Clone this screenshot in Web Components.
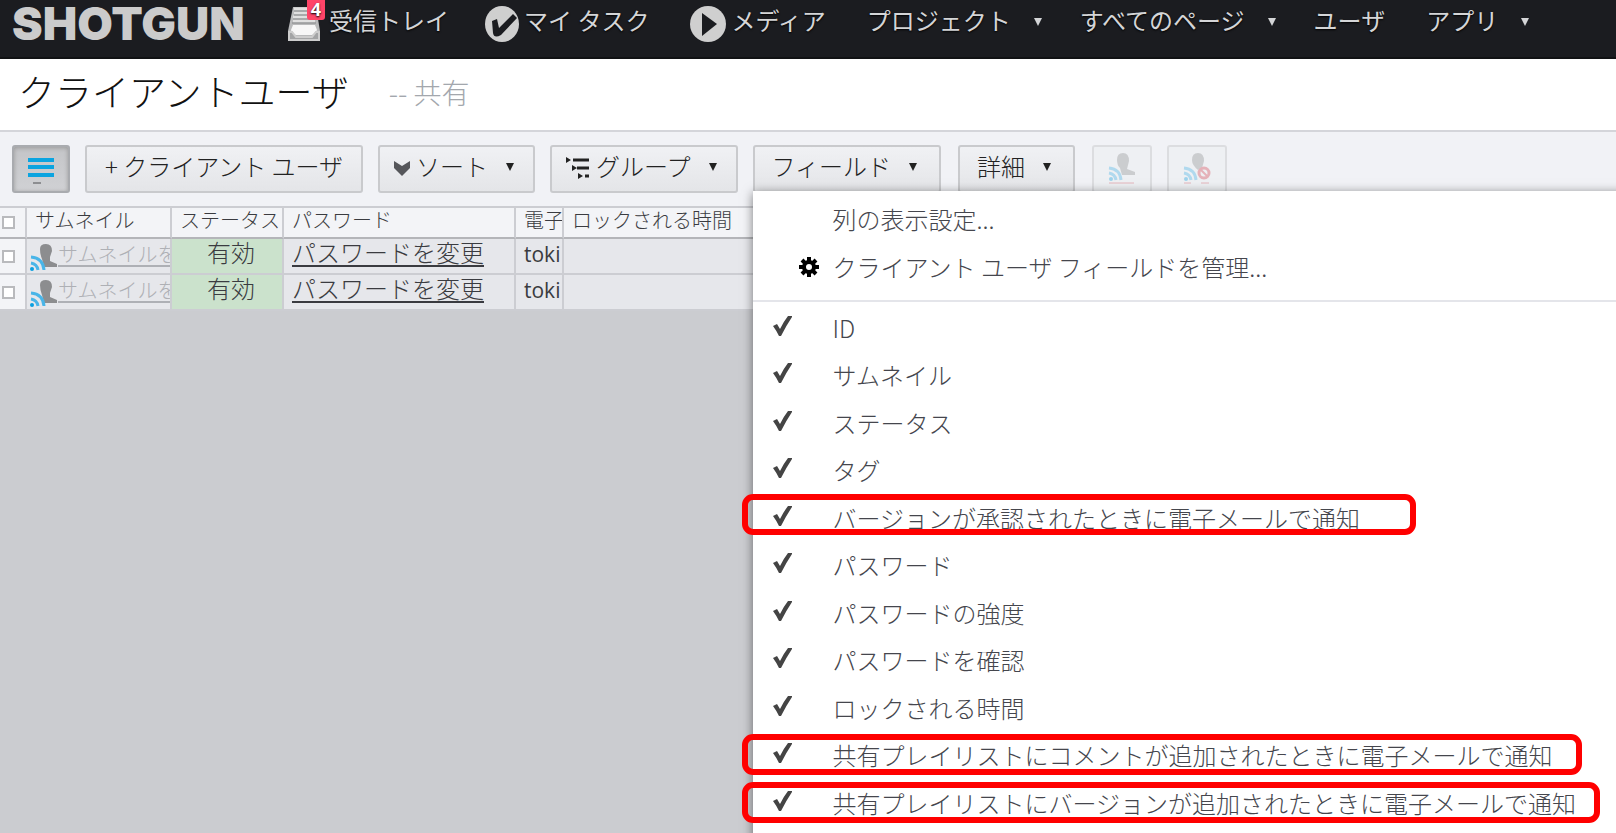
<!DOCTYPE html>
<html lang="ja">
<head>
<meta charset="utf-8">
<title>クライアントユーザ</title>
<style>
html, body { margin: 0; height: 100%; }
body { font-family: "Noto Sans CJK JP", "Noto Sans", sans-serif; font-weight: 300; background: #cbccd0; }
</style>
</head>
<body>
<sg-app></sg-app>
<script>
const define = (name, html, setup) => customElements.define(name, class extends HTMLElement {
  connectedCallback() {
    if (this.shadowRoot) return;
    this.attachShadow({ mode: "open" }).innerHTML = html;
    if (setup) setup(this, this.shadowRoot);
  }
});

const icons = {
  inbox: `<svg width="34" height="38" viewBox="0 0 34 38"><path d="M6 2h23l4 24v10H1V26z" fill="#b9babb"/><path d="M7 4h20M7 8h20M6 12h22M6 16h22" stroke="#e0e0e0" stroke-width="3"/><path d="M7 6h20M7 10h20M6 14h22M5 18h24" stroke="#858688"/><path d="M6 20h22l2 5q-2 4-5 5H9q-4-1-5-5z" fill="#f7f7f7"/><path d="M1 26h4l4 5h16l4-5h4v10H1z" fill="#a3a4a5"/><path d="M1 27h4l4 5h16l4-5h4M2 27v8h30v-8" fill="none" stroke="#cdcdcd" stroke-width="2"/></svg>`,
  task: `<svg width="34" height="36" viewBox="0 0 34 36"><ellipse cx="17" cy="18" rx="17" ry="18" fill="#cfcfcf"/><path d="M7 15l5-2 2 9L28 8l4 4-16 17q-7 4-8-2z" fill="#1b1c20"/></svg>`,
  media: `<svg width="36" height="36" viewBox="0 0 36 36"><circle cx="18" cy="18" r="18" fill="#cfcfcf"/><path d="M12 7l15 11-15 12z" fill="#1b1c20"/></svg>`,
  list: `<svg width="28" height="30" viewBox="0 0 28 30"><path d="M1 6h26M1 13h26M1 21h26" stroke="#0ba4e0" stroke-width="4"/><path d="M6 29h8" stroke="#8d8e91" stroke-width="2"/></svg>`,
  sort: `<svg width="16" height="16" viewBox="0 0 16 16"><path d="M0 0l8 5 8-5v7l-8 8-8-8z" fill="#55565a"/></svg>`,
  group: `<svg width="24" height="24" viewBox="0 0 24 24"><path d="M7 3h16M11 11h12M19 19h4" stroke="#222" stroke-width="3"/><path d="M0 0l5 3-5 3zM6 8l5 3-5 3zM12 16l5 3-5 3z" fill="#222"/></svg>`,
  gear: `<svg width="20" height="20" viewBox="0 0 20 20"><circle cx="10" cy="10" r="5" fill="none" stroke="#000" stroke-width="4"/><path d="M10 0v4M10 16v4M0 10h4M16 10h4M3 3l3 3M14 14l3 3M17 3l-3 3M6 14l-3 3" stroke="#000" stroke-width="4"/></svg>`,
  check: `<svg width="20" height="20" viewBox="0 0 20 20"><path d="M0 10l4-2 3 5q4-8 8-13h4v1Q13 10 8 20H6Q3 14 0 10z" fill="#444"/></svg>`,
  user: `<svg width="28" height="28" viewBox="0 0 28 28"><path d="M10 6q0-5 6-5t6 7l-2 6v4l7 3v3H14l-2-8q-2-5-2-10z" fill="#8c8d8f"/><g fill="none" stroke="#49b5e8" stroke-width="3"><path d="M1 14q12 1 13 13M1 20q6 1 7 7"/></g><circle cx="2" cy="26" r="2" fill="#0b9fe0"/></svg>`,
  follow: `<svg width="28" height="32" viewBox="0 0 28 32"><path d="M9 7q0-7 6-7t6 8l-2 8 8 3v3H14l-2-7q-3-3-3-8z" fill="#8c8d8f"/><g fill="none" stroke="#3fb0e6" stroke-width="3"><path d="M1 15q11 1 12 12M1 20q6 1 7 7"/></g><circle cx="3" cy="26" r="2" fill="#0b9fe0"/><path d="M1 30h25" stroke="#d34c5a"/></svg>`,
  unfollow: `<svg width="28" height="32" viewBox="0 0 28 32"><path d="M9 7q0-7 6-7t6 8l-2 7-4 2q-6-5-6-10z" fill="#8c8d8f"/><g fill="none" stroke="#3fb0e6" stroke-width="3"><path d="M1 15q11 1 12 12M1 20q6 1 7 7"/></g><circle cx="3" cy="26" r="2" fill="#0b9fe0"/><circle cx="21" cy="20" r="5" fill="none" stroke="#d6404f" stroke-width="3"/><path d="M17 16l8 8" stroke="#d6404f" stroke-width="2"/><path d="M1 30h7M18 30h8" stroke="#d34c5a"/></svg>`
};

define("sg-icon", `<style>:host{display:block;flex:none}svg{display:block}</style>`, (el, root) => {
  root.innerHTML += icons[el.getAttribute("name")];
});

define("sg-caret", `<style>:host{display:block;flex:none;width:0;border:solid transparent;border-width:8px 4px 0;border-top-color:currentColor}</style>`);

define("sg-nav-item", `
<style>
:host { display: block; position: relative; flex: none; }
a { display: flex; align-items: center; height: 48px; gap: var(--gap, 8px); color: #d4d5d7; font-size: 24px; font-weight: 400; line-height: 40px; text-decoration: none; white-space: nowrap; text-shadow: 0 1px 2px #000; }
b { position: absolute; left: 20px; top: 0; width: 18px; height: 20px; border-radius: 0 0 3px 3px; background: #ff4468; color: #fff; font: 700 18px/18px "Open Sans", sans-serif; text-align: center; }
span { padding-bottom: 8px; }
sg-caret { margin-bottom: 4px; }
</style>
<a href="#"><slot name="icon"></slot><span><slot></slot></span></a>`, (el, root) => {
  const a = root.querySelector("a");
  if (el.hasAttribute("menu")) a.insertAdjacentHTML("beforeend", "<sg-caret></sg-caret>");
  if (el.hasAttribute("count")) a.insertAdjacentHTML("beforeend", `<b>${el.getAttribute("count")}</b>`);
});

define("sg-header", `
<style>
:host { display: block; background: #1b1c20; border-bottom: 2px solid #111214; }
nav { display: flex; align-items: flex-start; height: 57px; padding-left: 12px; }
.logo { width: 275px; flex: none; color: #cbcbcb; font: 900 46px/46px Inter, sans-serif; text-decoration: none; }
sg-nav-item { margin-right: 41px; }
sg-nav-item[menu] { --gap: 23px; margin-right: 38px; }
.inbox { margin-right: 36px; }
.task, .media { --gap: 5px; }
</style>
<nav aria-label="メイン">
<a class="logo" href="#">SHOTGUN</a>
<sg-nav-item class="inbox" count="4"><sg-icon slot="icon" name="inbox"></sg-icon>受信トレイ</sg-nav-item>
<sg-nav-item class="task"><sg-icon slot="icon" name="task"></sg-icon>マイ タスク</sg-nav-item>
<sg-nav-item class="media"><sg-icon slot="icon" name="media"></sg-icon>メディア</sg-nav-item>
<sg-nav-item menu>プロジェクト</sg-nav-item>
<sg-nav-item menu>すべてのページ</sg-nav-item>
<sg-nav-item>ユーザ</sg-nav-item>
<sg-nav-item menu>アプリ</sg-nav-item>
</nav>`);

define("sg-title", `
<style>
:host { display: flex; align-items: center; gap: 40px; height: 71px; padding-left: 18px; background: #fff; border-bottom: 2px solid #d4d5da; }
h1 { margin: 0; font-size: 37px; font-weight: 300; line-height: 56px; color: #111; padding-bottom: 8px; }
p { margin: 0; font-size: 28px; line-height: 40px; color: #a3a7ad; padding-bottom: 6px; }
</style>
<h1><slot></slot></h1><p>-- 共有</p>`);

define("sg-button", `
<style>
:host { display: block; position: relative; flex: none; }
button { box-sizing: border-box; display: flex; align-items: center; gap: 6px; height: 48px; margin: 0; padding: 0 var(--pad, 14px); border: 2px solid #c9cacd; border-radius: 3px; background: linear-gradient(#f0f1f4, #e4e5e8); color: #222; font: inherit; font-size: 24px; line-height: 36px; white-space: nowrap; }
button > span { padding-bottom: 6px; }
sg-caret { margin: 0 5px 4px 12px; }
:host([pressed]) button { border-color: #a9abaf; background: linear-gradient(#c4c5c8, #d0d1d4); box-shadow: inset 0 1px 4px #999; }
:host([disabled]) button { border-color: #dcdde0; background: #eef0f3; }
:host([disabled]) ::slotted(sg-icon) { opacity: .35; }
</style>
<button><slot name="icon"></slot><span><slot></slot></span></button><slot name="menu"></slot>`, (el, root) => {
  const b = root.querySelector("button");
  if (el.hasAttribute("menu")) b.insertAdjacentHTML("beforeend", "<sg-caret></sg-caret>");
  if (el.hasAttribute("label")) { b.setAttribute("aria-label", el.getAttribute("label")); b.querySelector("span").remove(); }
  b.disabled = el.hasAttribute("disabled");
});

define("sg-field", `
<style>
:host { display: block; position: relative; height: 47px; }
:host(:nth-of-type(even)) { height: 48px; }
label { display: grid; grid-template-columns: 20px 1fr; column-gap: 40px; align-items: center; height: 46px; padding-left: 20px; font-size: 24px; line-height: 36px; }
.tick { display: grid; padding-bottom: 4px; }
.tick > * { grid-area: 1 / 1; }
input { appearance: none; margin: 0; width: 20px; height: 20px; }
i { position: absolute; box-sizing: border-box; left: -11px; top: var(--mark-top, 2px); width: var(--mark, 0); height: 41px; border: 6px solid #f00; border-radius: 11px; pointer-events: none; }
</style>
<label><span class="tick"><input type="checkbox" checked><sg-icon name="check"></sg-icon></span><span><slot></slot></span></label>`, (el, root) => {
  if (el.hasAttribute("marked")) root.innerHTML += "<i></i>";
});

define("sg-field-menu", `
<style>
:host { display: block; position: absolute; z-index: 2; left: 0; top: 46px; width: 100vw; background: #fff; color: #45464d; box-shadow: 0 2px 10px rgba(0,0,0,.5); }
.actions { padding: 4px 0 9px; border-bottom: 2px solid #e4e5ea; }
button { display: grid; grid-template-columns: 20px 1fr; align-items: center; column-gap: 14px; box-sizing: border-box; width: 100%; height: 48px; border: 0; margin: 0; padding: 0 0 0 46px; background: none; color: inherit; font: inherit; font-size: 24px; line-height: 36px; text-align: left; }
button span { grid-column: 2; }
.fields { padding: 3px 0 16px; }
.approve { --mark: 674px; --mark-top: -1px; } .comment { --mark: 840px; } .version { --mark: 858px; }
</style>
<div class="actions">
<button><span>列の表示設定...</span></button>
<button><sg-icon name="gear"></sg-icon><span>クライアント ユーザ フィールドを管理...</span></button>
</div>
<div class="fields">
<sg-field>ID</sg-field>
<sg-field>サムネイル</sg-field>
<sg-field>ステータス</sg-field>
<sg-field>タグ</sg-field>
<sg-field marked class="approve">バージョンが承認されたときに電子メールで通知</sg-field>
<sg-field>パスワード</sg-field>
<sg-field>パスワードの強度</sg-field>
<sg-field>パスワードを確認</sg-field>
<sg-field>ロックされる時間</sg-field>
<sg-field marked class="comment">共有プレイリストにコメントが追加されたときに電子メールで通知</sg-field>
<sg-field marked class="version">共有プレイリストにバージョンが追加されたときに電子メールで通知</sg-field>
</div>`);

define("sg-toolbar", `
<style>
:host { display: flex; align-items: flex-start; gap: 15px; height: 61px; padding: 13px 0 0 12px; background: #f1f2f6; }
.view { --pad: 13px; }
.new { --pad: 18px; }
.plain { --pad: 17px; margin-right: 2px; }
</style>
<sg-button class="view" pressed label="リスト表示"><sg-icon slot="icon" name="list"></sg-icon></sg-button>
<sg-button class="new">+ クライアント ユーザ</sg-button>
<sg-button menu><sg-icon slot="icon" name="sort"></sg-icon>ソート</sg-button>
<sg-button menu><sg-icon slot="icon" name="group"></sg-icon>グループ</sg-button>
<sg-button class="plain" menu>フィールド<sg-field-menu slot="menu"></sg-field-menu></sg-button>
<sg-button class="plain" menu>詳細</sg-button>
<sg-button disabled label="フォロー"><sg-icon slot="icon" name="follow"></sg-icon></sg-button>
<sg-button disabled label="フォロー解除"><sg-icon slot="icon" name="unfollow"></sg-icon></sg-button>`);

const row = n => `<tr>
<td class="pick"><input type="checkbox" aria-label="行 ${n} を選択"></td>
<td class="thumb"><div><sg-icon name="user"></sg-icon><a href="#">サムネイルを</a></div></td>
<td class="status">有効</td><td><a href="#">パスワードを変更</a></td><td class="mail">toki</td><td></td></tr>`;

define("sg-grid", `
<style>
:host { display: block; }
table { width: 100%; table-layout: fixed; border-collapse: separate; border-spacing: 0; color: #3a3b40; }
th, td { box-sizing: border-box; padding: 0 0 0 8px; border: solid #cccdd2; border-width: 0 2px 2px 0; white-space: nowrap; text-align: left; vertical-align: top; }
th { height: 33px; border-top-width: 2px; border-bottom-color: #b4b5b9; background: #f3f4f7; font-size: 20px; line-height: 24px; font-weight: 300; overflow: hidden; }
td { height: 36px; background: #e6e7eb; font-size: 24px; line-height: 26px; }
td a { color: inherit; text-underline-offset: 3px; }
.pick { padding: 0 0 0 2px; vertical-align: middle; background: #f3f4f7; line-height: 0; }
input { appearance: none; box-sizing: border-box; width: 13px; height: 13px; margin: 0; border: 2px solid #b9babd; background: #fff; }
.thumb { padding-left: 3px; overflow: hidden; }
.thumb div { display: flex; align-items: flex-start; color: #aeb0b5; font-size: 20px; line-height: 30px; }
.thumb sg-icon { margin-top: 4px; }
.status { background: #cbe2cc; text-align: center; }
.mail { font-family: "Open Sans", sans-serif; font-weight: 400; font-size: 21px; line-height: 30px; overflow: hidden; }
</style>
<table>
<colgroup><col style="width:27px"><col style="width:145px"><col style="width:112px"><col style="width:232px"><col style="width:48px"><col></colgroup>
<thead><tr><th class="pick"><input type="checkbox" aria-label="すべて選択"></th><th>サムネイル</th><th>ステータス</th><th>パスワード</th><th>電子</th><th>ロックされる時間</th></tr></thead>
<tbody>${row(1)}${row(2)}</tbody>
</table>`);

define("sg-app", `
<style>
:host { display: block; height: 100vh; overflow: hidden; }
</style>
<sg-header></sg-header>
<sg-title>クライアントユーザ</sg-title>
<sg-toolbar></sg-toolbar>
<sg-grid></sg-grid>`);
</script>
</body>
</html>
